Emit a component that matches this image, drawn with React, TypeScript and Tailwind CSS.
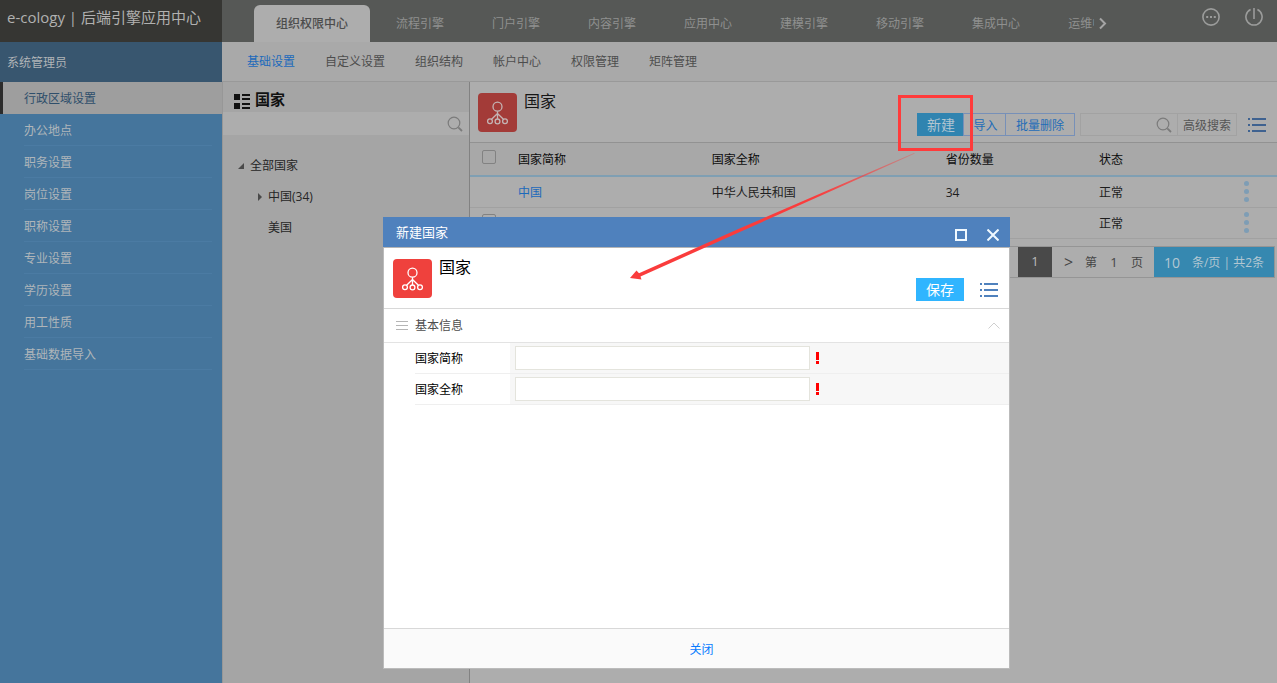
import React from 'react';
import clsx from 'clsx';

const topTabs = ['组织权限中心', '流程引擎', '门户引擎', '内容引擎', '应用中心', '建模引擎', '移动引擎', '集成中心', '运维中心'];
const subTabs = ['基础设置', '自定义设置', '组织结构', '帐户中心', '权限管理', '矩阵管理'];
const menuItems = ['行政区域设置', '办公地点', '职务设置', '岗位设置', '职称设置', '专业设置', '学历设置', '用工性质', '基础数据导入'];

interface Country {
  name: string;
  fullName: string;
  provinces: string;
  status: string;
  deletable: boolean;
}

const countries: Country[] = [
  { name: '中国', fullName: '中华人民共和国', provinces: '34', status: '正常', deletable: false },
  { name: '美国', fullName: '美国', provinces: '', status: '正常', deletable: true },
];

const OrgIcon = ({ className }: { className: string }) => (
  <svg viewBox="0 0 39 39" className={clsx('h-[39px] w-[39px] shrink-0 rounded', className)} fill="none" stroke="currentColor" strokeWidth="1.3">
    <circle cx="19.5" cy="13.7" r="4.5" />
    <path d="M19.5 18.2V26M19.5 20.5L13.6 26.2M19.5 20.5L25.4 26.2" />
    <circle cx="12" cy="28.2" r="2.4" />
    <circle cx="19.5" cy="28.4" r="2.4" />
    <circle cx="27" cy="28.2" r="2.4" />
  </svg>
);

const ListIcon = ({ className }: { className: string }) => (
  <svg viewBox="0 0 18 14" className={clsx('h-3.5 w-[18px]', className)} fill="currentColor" shapeRendering="crispEdges">
    <path d="M0 0h2v2H0zM4 0h14v2H4zM0 6h2v2H0zM4 6h14v2H4zM0 12h2v2H0zM4 12h14v2H4z" />
  </svg>
);

const SearchIcon = () => (
  <svg viewBox="0 0 16 16" className="h-4 w-4" fill="none" stroke="#7b7b7b">
    <circle cx="7" cy="7" r="5.8" strokeWidth="1.2" />
    <path d="M11.3 11.3L15 15" strokeWidth="1.8" />
  </svg>
);

const Header = () => (
  <header className="flex h-[42px] bg-[#565856]">
    <div className="w-[222px] shrink-0 bg-[#363633] pl-[7px] text-[15px] leading-[34px] whitespace-nowrap text-[#b1b1b0]">
      e-cology | 后端引擎应用中心
    </div>
    <nav className="flex min-w-0 flex-1 overflow-hidden pt-[5px] pl-8">
      {topTabs.map((tab, i) => (
        <a
          key={tab}
          href="#"
          className={clsx(
            'h-[37px] shrink-0 leading-[38px]',
            i === 0 ? 'mr-0.5 rounded-t-md bg-[#adadad] px-[22px] font-medium text-[#4c4c4c]' : 'px-6 text-[#8f908f]',
          )}
        >
          {tab}
        </a>
      ))}
    </nav>
    <div className="flex w-[183px] shrink-0 text-[#9b9c9b]">
      <button type="button" aria-label="更多" className="mt-3.5 ml-[3px] h-4 w-3">
        <svg viewBox="0 0 12 16" className="h-4 w-3" fill="none" stroke="#a5a5a5" strokeWidth="2">
          <path d="M3 4.5L8 9.5L3 14.5" />
        </svg>
      </button>
      <button type="button" aria-label="选项" className="mt-2 ml-auto h-[18px] w-[18px]">
        <svg viewBox="0 0 18 18" className="h-[18px] w-[18px]" fill="none" stroke="currentColor" strokeWidth="1.6">
          <circle cx="9" cy="9" r="8.1" />
          <path d="M4.2 9h2M8 9h2M11.8 9h2" strokeWidth="2" />
        </svg>
      </button>
      <button type="button" aria-label="退出" className="mt-2 mr-3.5 ml-[25px] h-[18px] w-[18px]">
        <svg viewBox="0 0 18 18" className="h-[18px] w-[18px]" fill="none" stroke="currentColor" strokeWidth="1.6">
          <path d="M5.6 1.6A8.1 8.1 0 1 0 12.4 1.6M9 0V11" />
        </svg>
      </button>
    </div>
  </header>
);

const Sidebar = () => (
  <aside className="w-[222px] shrink-0 bg-[#45759c]">
    <div className="h-10 bg-[#38566f] pl-[7px] leading-[42px] text-[#b0b4b7]">系统管理员</div>
    <nav>
      {menuItems.map((item, i) => (
        <a
          key={item}
          href="#"
          className={clsx(
            'block h-8 leading-[34px]',
            i === 0 ? 'border-l-[3px] border-[#2c2c2c] bg-[#9e9e9e] pl-[21px] text-[#2f4f6b]' : 'mr-2.5 ml-6 border-b border-[#4b7ba3] text-[#afb5ba]',
          )}
        >
          {item}
        </a>
      ))}
    </nav>
  </aside>
);

const TreePanel = () => (
  <section className="w-[248px] shrink-0 border-x border-r-[#828282] border-l-[#979797] bg-[#a5a5a5]">
    <div className="flex h-[30px] items-center gap-[5px] pl-[11px]">
      <svg viewBox="0 0 16 15" className="mt-2 h-[15px] w-4" fill="#111" shapeRendering="crispEdges">
        <path d="M0 0h6v6H0zM8 0h8v2H8zM8 4h8v2H8zM0 9h6v6H0zM8 9h8v2H8zM8 13h8v2H8z" />
      </svg>
      <h2 className="pt-1 text-[15px] font-bold text-[#111]">国家</h2>
    </div>
    <div className="flex h-[23px] items-center bg-[#adadad] pr-1.5">
      <input aria-label="搜索国家" className="min-w-0 flex-1 bg-transparent px-2 outline-none" />
      <button type="button" aria-label="搜索">
        <SearchIcon />
      </button>
    </div>
    <ul className="pt-[15px] leading-[31px] text-[#262626]">
      <li className="flex items-center gap-1.5 pl-[15px]">
        <svg viewBox="0 0 6 6" className="h-1.5 w-1.5" fill="#4a4a4a">
          <path d="M6 0V6H0z" />
        </svg>
        全部国家
      </li>
      <li className="flex items-center gap-1.5 pl-[35px]">
        <svg viewBox="0 0 4 8" className="h-2 w-1" fill="#4a4a4a">
          <path d="M0 0L4 4L0 8z" />
        </svg>
        中国(34)
      </li>
      <li className="pl-[45px]">美国</li>
    </ul>
  </section>
);

const Checkbox = ({ label }: { label: string }) => (
  <input type="checkbox" aria-label={label} className="mb-1 block h-3.5 w-3.5 appearance-none rounded-xs border border-[#828282]" />
);

const Toolbar = () => (
  <div className="flex h-[61px] border-b border-[#929292] pr-[11px] pl-2">
    <OrgIcon className="mt-[11px] bg-[#a33b38] text-[#c4b4b4]" />
    <h1 className="mt-[7px] ml-[7px] text-[16px] leading-6 text-[#161616]">国家</h1>
    <div className="mt-[31px] ml-auto flex h-[23px] items-stretch">
      <div className="relative flex">
        <button type="button" className="w-[46px] bg-[#3084b0] pl-0.5 text-[14px] leading-6 text-[#b2c5d0]">
          新建
        </button>
        {/* highlight frame around the create button */}
        <span className="pointer-events-none absolute -top-[18px] -right-2.5 -bottom-[15px] -left-[19px] z-10 border-[3px] border-[#ff3b3b]" />
      </div>
      <button type="button" className="w-[42px] border border-r-0 border-[#7790b8] pl-0.5 leading-6 text-[#1e6cb8]">
        导入
      </button>
      <button type="button" className="w-[70px] border border-[#7790b8] leading-6 text-[#1e6cb8]">
        批量删除
      </button>
      <div className="ml-[5px] flex items-center border border-r-0 border-[#a2a2a2] pr-[5px]">
        <input aria-label="搜索" className="w-[75px] bg-transparent px-1 outline-none" />
        <button type="button" aria-label="搜索">
          <SearchIcon />
        </button>
      </div>
      <button type="button" className="w-[60px] border border-[#a2a2a2] leading-6 text-[#555]">
        高级搜索
      </button>
      <button type="button" aria-label="菜单" className="ml-[11px]">
        <ListIcon className="text-[#3f6290]" />
      </button>
    </div>
  </div>
);

const CountryTable = () => (
  <table className="w-full table-fixed text-left text-[#1d1d1d]">
    <colgroup>
      <col className="w-12" />
      <col className="w-[24%]" />
      <col className="w-[29%]" />
      <col className="w-[19%]" />
      <col className="w-[18%]" />
      <col />
    </colgroup>
    <thead className="bg-[#a8a8a8]">
      <tr className="h-[33px] border-b-2 border-[#7f9fb3] text-[#0c0c0c]">
        <th className="pl-3">
          <Checkbox label="全选" />
        </th>
        <th className="pt-0.5 font-normal">国家简称</th>
        <th className="pt-0.5 font-normal">国家全称</th>
        <th className="pt-0.5 font-normal">省份数量</th>
        <th className="pt-0.5 font-normal">状态</th>
        <th />
      </tr>
    </thead>
    <tbody>
      {countries.map((c) => (
        <tr key={c.name} className="h-[31px] border-b border-[#a1a1a1]">
          <td className="pl-3">{c.deletable && <Checkbox label={c.name} />}</td>
          <td className="pt-0.5">
            <a href="#" className="text-[#1c69bb]">
              {c.name}
            </a>
          </td>
          <td className="pt-0.5">{c.fullName}</td>
          <td className="pt-0.5">{c.provinces}</td>
          <td className="pt-0.5">{c.status}</td>
          <td>
            <button type="button" aria-label="操作" className="block">
              <svg viewBox="0 0 5 21" className="h-[21px] w-[5px]" fill="#7e9db5">
                <circle cx="2.5" cy="2.5" r="2.5" />
                <circle cx="2.5" cy="10.5" r="2.5" />
                <circle cx="2.5" cy="18.5" r="2.5" />
              </svg>
            </button>
          </td>
        </tr>
      ))}
    </tbody>
  </table>
);

const Pagination = () => (
  <div className="mt-[7px] mr-0.5 flex justify-end">
    <div className="flex h-8 items-stretch border border-[#959595] pl-[200px] text-[#454545]">
      <button type="button" className="w-[34px] bg-[#494949] text-[13px] text-[#bbb]">
        1
      </button>
      <button type="button" aria-label="下一页" className="w-[33px] text-base">
        &gt;
      </button>
      <label className="flex items-center pt-0.5">
        第
        <input defaultValue="1" className="w-[34px] bg-transparent text-center text-[13px] outline-none" />页
      </label>
      <div className="ml-[11px] flex w-[120px] items-center justify-center gap-3 bg-[#3688b0] pt-0.5 text-[#b3c7d2]">
        <span className="text-sm">10</span>
        <span>条/页 | 共2条</span>
      </div>
    </div>
  </div>
);

const fields = [
  { id: 'shortName', label: '国家简称' },
  { id: 'fullName', label: '国家全称' },
];

const CreateDialog = () => (
  <div role="dialog" aria-label="新建国家" className="absolute top-[217px] left-[30%] z-20 flex h-[452px] w-[627px] flex-col border border-[#bbb] border-t-0 bg-white">
    <div className="-mx-px flex h-[31px] shrink-0 items-center border-b border-[#b5b5b5] bg-[#4f81bd] pr-[11px] pl-[13px] text-white">
      <h2 className="pt-0.5 text-[13px]">新建国家</h2>
      <button type="button" aria-label="最大化" className="mt-1.5 ml-auto h-3 w-3 border-2 border-[#f0f9ff]" />
      <button type="button" aria-label="关闭窗口" className="mt-1.5 ml-5">
        <svg viewBox="0 0 12 12" className="h-3 w-3" stroke="#f0f9ff" strokeWidth="2">
          <path d="M.5 .5L11.5 11.5M11.5 .5L.5 11.5" />
        </svg>
      </button>
    </div>
    <div className="flex h-[61px] shrink-0 border-b border-[#d8d8d8] pr-[11px] pl-[9px]">
      <OrgIcon className="mt-[11px] bg-[#ef413d] text-white" />
      <h3 className="mt-[7px] ml-[7px] text-[16px] leading-6 text-black">国家</h3>
      <div className="mt-[30px] ml-auto flex h-[23px] items-stretch">
        <button type="button" className="w-12 bg-[#30b5ff] text-[14px] leading-6 text-white">
          保存
        </button>
        <button type="button" aria-label="菜单" className="ml-4">
          <ListIcon className="text-[#4f81bd]" />
        </button>
      </div>
    </div>
    <div className="flex h-[34px] shrink-0 items-center border-b border-[#e3e3e3] pr-[9px] pl-3 text-[#4d4d4d]">
      <svg viewBox="0 0 12 9" className="mr-[7px] h-[9px] w-3" fill="#b5b5b5" shapeRendering="crispEdges">
        <path d="M0 0h12v1H0zM0 4h12v1H0zM0 8h12v1H0z" />
      </svg>
      基本信息
      <button type="button" aria-label="收起" className="ml-auto">
        <svg viewBox="0 0 12 7" className="h-[7px] w-3" fill="none" stroke="#cfcfcf">
          <path d="M.5 6.5L6 1L11.5 6.5" />
        </svg>
      </button>
    </div>
    <form className="flex-1">
      {fields.map((field) => (
        <div key={field.id} className="flex h-[31px]">
          <label htmlFor={field.id} className="ml-[31px] w-[95px] border-b border-[#efefef] leading-8 text-black">
            {field.label}
          </label>
          <div className="flex flex-1 items-center border-b border-[#efefef] bg-[#f7f7f7] pl-[5px]">
            <input id={field.id} className="h-6 w-[295px] border border-[#e4e4dd] bg-white px-1 outline-none" />
            <svg viewBox="0 0 3 12" className="ml-1.5 h-3 w-[3px]" fill="#f00" shapeRendering="crispEdges">
              <path d="M0 0h3v8H0zM0 9h3v3H0z" />
            </svg>
          </div>
        </div>
      ))}
    </form>
    <div className="flex h-10 shrink-0 items-center justify-center border-t border-[#d8d8d8] bg-[#fafafa] pt-0.5 pl-2.5">
      <button type="button" className="text-[#077bff]">
        关闭
      </button>
    </div>
  </div>
);

/* pointer from the create button to the dialog it opens */
const Pointer = () => (
  <svg viewBox="0 0 290 130" className="pointer-events-none absolute top-[150px] left-[630px] z-30 h-[130px] w-[290px]">
    <defs>
      <linearGradient id="fade" x1="0" x2="1">
        <stop offset="0.65" stopColor="#fa3c3c" />
        <stop offset="1" stopColor="#fa3c3c" stopOpacity="0.3" />
      </linearGradient>
    </defs>
    <path d="M0 128L6.5 120.5L9 123.3L110 78.3L284 3L285 3.6L111.5 81.3L10.5 126.5L11.5 129.5Z" fill="url(#fade)" />
  </svg>
);

const App = () => (
  <div className="relative flex min-h-screen flex-col bg-[#adadad] font-['Open_Sans','Noto_Sans_CJK_SC',sans-serif] text-[12px]">
    <Header />
    <div className="flex flex-1">
      <Sidebar />
      <div className="flex min-w-0 flex-1 flex-col">
        <nav className="flex h-10 gap-[30px] border-b border-[#999] bg-[#a9a9a9] pl-[25px] leading-10 text-[#4d4d4d]">
          {subTabs.map((tab, i) => (
            <a key={tab} href="#" className={clsx(i === 0 && 'text-[#1c69bb]')}>
              {tab}
            </a>
          ))}
        </nav>
        <div className="flex flex-1">
          <TreePanel />
          <main className="min-w-0 flex-1">
            <Toolbar />
            <CountryTable />
            <Pagination />
          </main>
        </div>
      </div>
    </div>
    <CreateDialog />
    <Pointer />
  </div>
);

export default App;
